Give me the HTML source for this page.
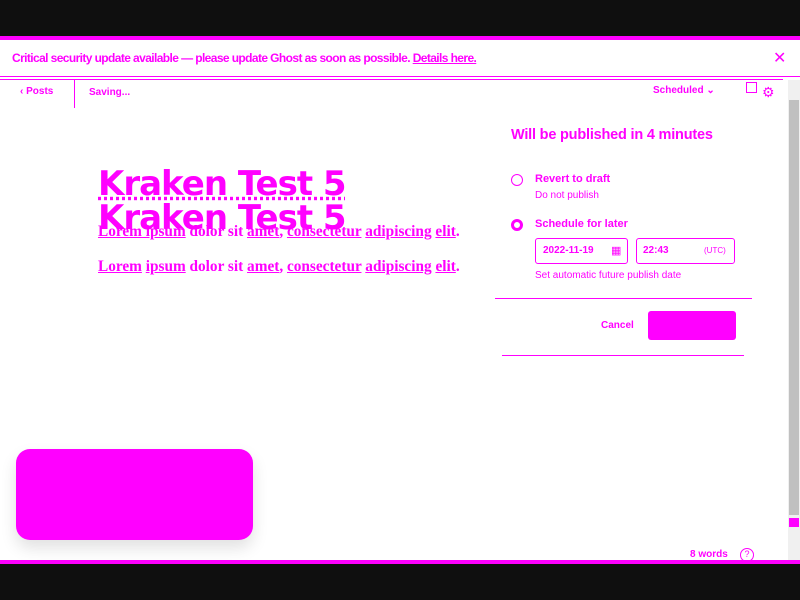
<!DOCTYPE html>
<html><head><style>
*{margin:0;padding:0;box-sizing:border-box}
body{width:800px;height:600px;overflow:hidden;background:#fff;font-family:"Liberation Sans",sans-serif;color:#f0f;position:relative}
.a{position:absolute}
.t{font-weight:bold;white-space:nowrap}
</style></head><body>
<div class="a" style="left:0;top:0;width:800px;height:36px;background:#0f0f0f"></div>
<div class="a" style="left:0;top:36px;width:800px;height:4px;background:#f0f"></div>
<div class="a t" style="left:12px;top:51px;font-size:12px;letter-spacing:-0.6px">Critical security update available — please update Ghost as soon as possible. <u>Details here.</u></div>
<div class="a" style="left:773px;top:48px;font-size:16px">✕</div>
<div class="a" style="left:0;top:76px;width:800px;height:1px;background:#f0f"></div>
<div class="a" style="left:0;top:79px;width:783px;height:1px;background:#f0f"></div>
<div class="a t" style="left:20px;top:86px;font-size:10px">‹ Posts</div>
<div class="a" style="left:74px;top:80px;width:1px;height:28px;background:#f0f"></div>
<div class="a t" style="left:89px;top:87px;font-size:10px">Saving...</div>
<div class="a t" style="left:653px;top:85px;font-size:10px">Scheduled ⌄</div>
<div class="a" style="left:746px;top:82px;width:11px;height:11px;border:1.5px solid #f0f"></div>
<div class="a" style="left:762px;top:84px;font-size:14px">⚙</div>
<div class="a" style="left:788px;top:80px;width:12px;height:484px;background:#f0f0f0"></div>
<div class="a" style="left:789px;top:100px;width:10px;height:415px;background:#c0c0c0"></div>
<div class="a" style="left:789px;top:518px;width:10px;height:9px;background:#f0f"></div>
<div class="a t" style="left:98px;top:164px;font-size:34px;font-family:'DejaVu Sans',sans-serif;letter-spacing:-1px;text-decoration:underline dotted">Kraken Test 5</div>
<div class="a t" style="left:98px;top:198px;font-size:34px;font-family:'DejaVu Sans',sans-serif;letter-spacing:-1px">Kraken Test 5</div>
<div class="a t" style="left:98px;top:223px;font-size:15.3px;font-family:'Liberation Serif',serif"><u>Lorem ipsum</u> dolor sit <u>amet</u>, <u>consectetur</u> <u>adipiscing</u> <u>elit</u>.</div>
<div class="a t" style="left:98px;top:258px;font-size:15.3px;font-family:'Liberation Serif',serif"><u>Lorem</u> <u>ipsum</u> dolor sit <u>amet</u>, <u>consectetur</u> <u>adipiscing</u> <u>elit</u>.</div>
<div class="a t" style="left:511px;top:127px;font-size:14.5px;letter-spacing:-0.2px">Will be published in 4 minutes</div>
<div class="a" style="left:511px;top:174px;width:12px;height:12px;border:1.5px solid #f0f;border-radius:50%"></div>
<div class="a t" style="left:535px;top:173px;font-size:11px">Revert to draft</div>
<div class="a" style="left:535px;top:190px;font-size:10px">Do not publish</div>
<div class="a" style="left:511px;top:219px;width:12px;height:12px;border:3px solid #f0f;border-radius:50%"></div>
<div class="a t" style="left:535px;top:218px;font-size:11px">Schedule for later</div>
<div class="a" style="left:535px;top:238px;width:93px;height:26px;border:1.5px solid #f0f;border-radius:3px"></div>
<div class="a t" style="left:543px;top:245px;font-size:10px">2022-11-19</div>
<div class="a" style="left:611px;top:244px;font-size:11px">▦</div>
<div class="a" style="left:636px;top:238px;width:99px;height:26px;border:1.5px solid #f0f;border-radius:3px"></div>
<div class="a t" style="left:643px;top:245px;font-size:10px">22:43</div>
<div class="a" style="left:704px;top:246px;font-size:8px">(UTC)</div>
<div class="a" style="left:535px;top:270px;font-size:10px">Set automatic future publish date</div>
<div class="a" style="left:495px;top:298px;width:257px;height:1px;background:#f0f"></div>
<div class="a t" style="left:601px;top:320px;font-size:10px">Cancel</div>
<div class="a" style="left:648px;top:311px;width:88px;height:29px;background:#f0f;border-radius:3px"></div>
<div class="a" style="left:502px;top:355px;width:242px;height:1px;background:#f0f"></div>
<div class="a" style="left:16px;top:449px;width:237px;height:91px;background:#f0f;border-radius:14px;box-shadow:0 8px 16px rgba(0,0,0,0.12)"></div>
<div class="a t" style="left:690px;top:549px;font-size:10px">8 words</div>
<div class="a" style="left:740px;top:548px;width:14px;height:14px;border:1.5px solid #f0f;border-radius:50%;font-size:9px;text-align:center;line-height:11px">?</div>
<div class="a" style="left:0;top:560px;width:800px;height:4px;background:#f0f"></div>
<div class="a" style="left:0;top:564px;width:800px;height:36px;background:#0f0f0f"></div>
</body></html>
